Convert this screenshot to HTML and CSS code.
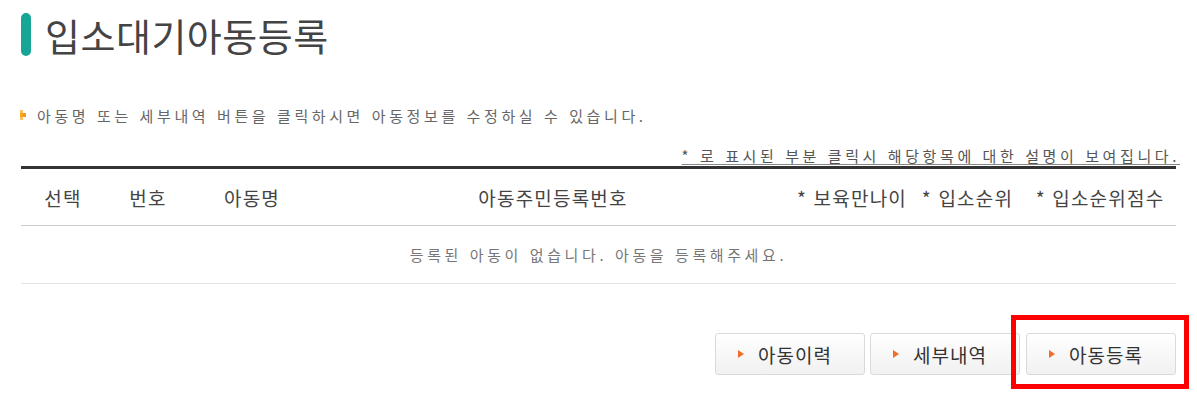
FILE: index.html
```html
<!DOCTYPE html>
<html lang="ko">
<head>
<meta charset="utf-8">
<link rel="stylesheet" href="styles.css">
</head>
<body>
<div class="page">
  <h1 class="title"><span class="title-bar"></span><span class="title-text">입소대기아동등록</span></h1>
  <p class="guide"><svg class="bullet" width="7" height="10" viewBox="0 0 7 10"><rect x="0" y="0" width="3" height="3" fill="#fbc15a"/><rect x="3" y="3" width="3" height="4" fill="#f7941d"/><rect x="0" y="3" width="3" height="4" fill="#f5a623"/><rect x="0" y="7" width="3" height="3" fill="#fbc15a"/></svg><span>아동명 또는 세부내역 버튼을 클릭하시면 아동정보를 수정하실 수 있습니다.</span></p>
  <p class="note">* 로 표시된 부분 클릭시 해당항목에 대한 설명이 보여집니다.</p>
  <div class="table">
    <div class="row head">
      <div>선택</div>
      <div>번호</div>
      <div>아동명</div>
      <div>아동주민등록번호</div>
      <div>* 보육만나이</div>
      <div>* 입소순위</div>
      <div>* 입소순위점수</div>
    </div>
    <div class="empty">등록된 아동이 없습니다. 아동을 등록해주세요.</div>
  </div>
  <div class="buttons">
    <button class="btn"><span class="arrow"></span>아동이력</button>
    <button class="btn"><span class="arrow"></span>세부내역</button>
    <div class="highlight">
      <button class="btn"><span class="arrow"></span>아동등록</button>
      <span class="mark"></span>
    </div>
  </div>
</div>
</body>
</html>
```

FILE: styles.css
```css
* { box-sizing: border-box; }
html, body { margin: 0; padding: 0; background: #fff; }
body { font-family: "Noto Sans CJK KR", "Noto Sans", sans-serif; color: #444; }
.page { width: 1197px; min-height: 400px; padding: 13px 21px 0 21px; }

.title { margin: 0; display: flex; align-items: center; height: 43px; }
.title-bar { width: 10px; height: 43px; border-radius: 5px; background: #17a596; }
.title-text { margin-left: 14px; font-size: 38px; font-weight: 400; color: #444; line-height: 43px; letter-spacing: 0.5px; }

.guide { margin: 49px 0 0 -1px; display: flex; align-items: center; height: 20px; font-size: 15px; color: #666; letter-spacing: 3.6px; }
.bullet { margin-right: 10px; }

.note { margin: 21px -4px 0 0; height: 20px; text-align: right; font-size: 15px; color: #555; letter-spacing: 3.6px; text-decoration: underline; text-decoration-color: #888; text-underline-offset: 2px; line-height: 20px; }

.table { margin-top: 0; border-top: 3px solid #333; }
.row { display: grid; grid-template-columns: 84px 86px 122px 480px 118px 113px 152px; height: 57px; align-items: center; border-bottom: 1px solid #ccc; font-size: 19px; letter-spacing: 1.2px; color: #444; }
.row > div { text-align: center; }
.empty { height: 58px; display: flex; align-items: center; justify-content: center; border-bottom: 1px solid #e3e3e3; font-size: 15px; color: #777; letter-spacing: 3.6px; }

.buttons { display: flex; justify-content: flex-end; align-items: flex-start; gap: 5px; margin-top: 49px; }
.btn { width: 150px; height: 42px; display: flex; align-items: center; padding: 0 0 0 22px; border: 1px solid #dadada; border-radius: 3px; background: linear-gradient(#ffffff, #f1f1f1); font-family: "Noto Sans CJK KR", sans-serif; font-size: 19px; letter-spacing: 1px; color: #333; }
.highlight { position: relative; margin-left: 1px; height: 42px; }
.mark { position: absolute; left: -15px; top: -18px; right: -13px; bottom: -14px; border: 5px solid #ff0000; pointer-events: none; }
.arrow { width: 0; height: 0; border-top: 4.5px solid transparent; border-bottom: 4.5px solid transparent; border-left: 6px solid #f26c2c; margin-right: 14px; }
```
